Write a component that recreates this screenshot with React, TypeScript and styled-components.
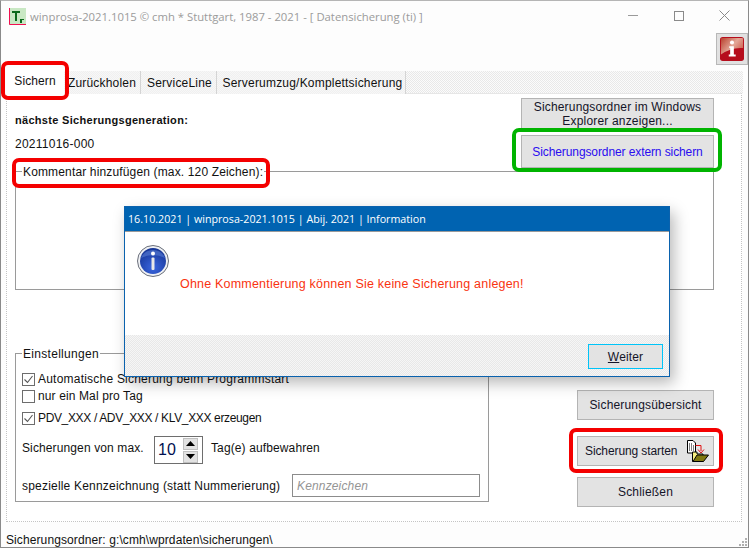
import React from "react";
import styled, { createGlobalStyle, css } from "styled-components";

const Global = createGlobalStyle`
  html, body { margin: 0; padding: 0; background: #fff; }
  body { font-family: "Liberation Sans", Arial, sans-serif; font-size: 12px; color: #111; }
`;

const dither = (a: string, b: string) => css`
  background: repeating-conic-gradient(${a} 0 25%, ${b} 0 50%) 0 0 / 2px 2px;
`;

const Window = styled.div`
  position: relative;
  box-sizing: border-box;
  width: 749px;
  height: 548px;
  background: #fdfdfd;
  border: 1px solid #8a8a8a;
  border-top-color: #b5b5b5;
  display: flex;
  flex-direction: column;
  overflow: hidden;
`;

const TitleBar = styled.header`
  box-sizing: border-box;
  height: 31px;
  flex: none;
  display: flex;
  align-items: center;
  padding: 0 0 1px 8px;
  gap: 4px;
`;

const TitleText = styled.span`
  font-family: "Open Sans", sans-serif;
  font-size: 11.3px;
  color: #9b9b9b;
  white-space: nowrap;
  flex: 1;
`;

const WinControls = styled.div`
  display: flex;
  align-items: center;
  height: 30px;
  padding-right: 18px;
  padding-bottom: 1px;
  box-sizing: border-box;
  gap: 35px;
`;

const ToolRow = styled.div`
  height: 39px;
  flex: none;
  display: flex;
  justify-content: flex-end;
  align-items: flex-start;
  padding-top: 1px;
  box-sizing: border-box;
`;

const InfoButton = styled.div`
  box-sizing: border-box;
  width: 32px;
  height: 32px;
  background: #e1e1e1;
  border: 1px solid #b8b8b8;
  display: flex;
  align-items: center;
  justify-content: center;
`;

const TabStrip = styled.nav`
  flex: none;
  height: 23px;
  margin-left: 5px;
  margin-right: 5px;
  display: flex;
  align-items: flex-end;
  ${dither("#e8e8e8", "#fbfbfb")}
`;

const Tab = styled.div<{ $active?: boolean; $w: number; $pl?: number }>`
  position: relative;
  box-sizing: border-box;
  width: ${(p) => p.$w}px;
  height: ${(p) => (p.$active ? "26px" : "23px")};
  flex: none;
  display: flex;
  align-items: center;
  justify-content: center;
  border-right: 1px solid #d4d4d4;
  padding-left: ${(p) => p.$pl ?? 0}px;
  letter-spacing: 0.2px;
  white-space: nowrap;
  ${(p) => (p.$active ? "background: #fff; border: 0; z-index: 1; letter-spacing: 0.1px;" : dither("#f0f0f0", "#f7f7f7"))}
`;

const Ring = styled.span<{ $color: string; $l: number; $r: number; $t: number; $b: number }>`
  position: absolute;
  left: ${(p) => p.$l}px;
  right: ${(p) => p.$r}px;
  top: ${(p) => p.$t}px;
  bottom: ${(p) => p.$b}px;
  border: 4px solid ${(p) => p.$color};
  border-radius: 7px;
  pointer-events: none;
  z-index: 2;
`;

const Panel = styled.main`
  box-sizing: border-box;
  height: 429px;
  flex: none;
  margin-left: 5px;
  width: 736px;
  margin-top: -1px;
  background: #fff;
  border: 1px dotted #c4c4c4;
  border-top: 1px solid #e6e6e6;
  padding-left: 8px;
  padding-right: 27px;
`;

const TopRow = styled.section`
  height: 77px;
  display: flex;
  justify-content: space-between;
`;

const GenInfo = styled.div`
  padding-top: 20px;
`;

const GenLabel = styled.div`
  font-size: 11px;
  font-weight: 700;
  line-height: 13px;
  letter-spacing: 0.3px;
`;

const GenValue = styled.div`
  margin-top: 10px;
  line-height: 14px;
  letter-spacing: 0.25px;
`;

const TopButtons = styled.div`
  width: 193px;
  padding-top: 4px;
  display: flex;
  flex-direction: column;
  gap: 5px;
`;

const Button = styled.div<{ $h: number; $blue?: boolean; $spread?: boolean }>`
  position: relative;
  box-sizing: border-box;
  height: ${(p) => p.$h}px;
  background: #e3e3e3;
  border: 1px solid #b4b4b4;
  display: flex;
  align-items: center;
  justify-content: ${(p) => (p.$spread ? "space-between" : "center")};
  text-align: center;
  line-height: 14px;
  letter-spacing: ${(p) => (p.$blue || p.$spread ? "-0.1px" : "0.18px")};
  color: ${(p) => (p.$blue ? "#2a0cf0" : "#141428")};
  ${(p) => p.$spread && "padding: 0 4px 0 7px;"}
`;

const GroupBox = styled.section<{ $h: number; $w?: number }>`
  position: relative;
  box-sizing: border-box;
  height: ${(p) => p.$h}px;
  width: ${(p) => (p.$w ? `${p.$w}px` : "auto")};
  flex: none;
  border: 1px solid #9a9a9a;
`;

const Legend = styled.span<{ $ls?: number }>`
  position: absolute;
  left: 6px;
  top: -7px;
  padding: 0 1px;
  background: #fff;
  line-height: 14px;
  letter-spacing: ${(p) => p.$ls ?? 0.15}px;
  white-space: nowrap;
`;

const LowerRow = styled.section`
  margin-top: 63px;
  display: flex;
  align-items: flex-start;
`;

const Settings = styled.div`
  padding: 18px 0 0 6px;
  display: flex;
  flex-direction: column;
`;

const CheckRow = styled.label<{ $mt: number; $ls: number }>`
  margin-top: ${(p) => p.$mt}px;
  height: 14px;
  display: flex;
  align-items: center;
  gap: 3px;
  white-space: nowrap;
  letter-spacing: ${(p) => p.$ls}px;
`;

const CheckBox = styled.span`
  box-sizing: border-box;
  width: 13px;
  height: 13px;
  background: #fff;
  border: 1px solid #6d6d6d;
  display: flex;
`;

const SpinRow = styled.div`
  margin-top: 11px;
  display: flex;
  align-items: center;
  height: 28px;
  white-space: nowrap;
  letter-spacing: 0.12px;
`;

const SpinLabel = styled.span<{ $w?: number }>`
  width: ${(p) => (p.$w ? `${p.$w}px` : "auto")};
  margin-bottom: 4px;
`;

const Spinner = styled.div`
  box-sizing: border-box;
  width: 49px;
  height: 28px;
  margin-right: 8px;
  border: 1px solid #6e6e6e;
  display: flex;
  align-items: center;
  padding-left: 3px;
  justify-content: space-between;
  padding-right: 4px;
`;

const SpinValue = styled.span`
  font-size: 16px;
  color: #001050;
`;

const SpinButtons = styled.div`
  width: 15px;
  display: flex;
  flex-direction: column;
  gap: 1px;
`;

const SpinBtn = styled.div`
  height: 12px;
  background: #e2e2e2;
  border: 1px solid #c0c0c0;
  box-sizing: border-box;
  display: flex;
  align-items: center;
  justify-content: center;
`;

const MarkRow = styled.div`
  margin-top: 10px;
  display: flex;
  align-items: center;
  height: 23px;
  white-space: nowrap;
  letter-spacing: 0.2px;
`;

const MarkLabel = styled.span`
  width: 270px;
`;

const MarkInput = styled.div`
  box-sizing: border-box;
  width: 188px;
  height: 23px;
  border: 1px solid #8c8c8c;
  padding-left: 4px;
  display: flex;
  align-items: center;
  font-style: italic;
  letter-spacing: 0.15px;
  color: #959595;
`;

const SideButtons = styled.div`
  margin-left: 88px;
  margin-top: 37px;
  width: 137px;
  flex: none;
  display: flex;
  flex-direction: column;
`;

const Gap = styled.div<{ $h: number }>`
  height: ${(p) => p.$h}px;
`;

const StatusBar = styled.footer`
  flex: 1;
  display: flex;
  align-items: center;
  padding-left: 5px;
  padding-top: 10px;
  letter-spacing: 0.1px;
  white-space: nowrap;
`;

const Grip = styled.svg`
  position: absolute;
  right: 0;
  bottom: 0;
`;

const Dialog = styled.div`
  position: absolute;
  left: 123px;
  top: 205px;
  box-sizing: border-box;
  width: 546px;
  height: 171px;
  background: #fff;
  border: 1px solid #0a62ae;
  box-shadow: 4px 6px 14px rgba(0, 0, 0, 0.28);
  display: flex;
  flex-direction: column;
  z-index: 1;
`;

const DialogTitle = styled.div`
  flex: none;
  box-sizing: border-box;
  height: 25px;
  background: #0063b1;
  border-bottom: 1px solid #9a9a9a;
  color: #fff;
  font-family: "Open Sans", sans-serif;
  font-size: 10.7px;
  display: flex;
  align-items: center;
  padding-left: 3px;
  white-space: nowrap;
`;

const DialogBody = styled.div`
  box-sizing: border-box;
  height: 103px;
  flex: none;
  padding: 13px 0 0 12px;
  display: flex;
  align-items: flex-start;
  gap: 11px;
`;

const DialogMessage = styled.p`
  margin: 32px 0 0;
  font-size: 12.5px;
  color: #f93310;
  letter-spacing: 0.2px;
  line-height: 14px;
`;

const DialogFooter = styled.div`
  flex: 1;
  display: flex;
  justify-content: flex-end;
  align-items: flex-start;
  padding: 9px 6px 0 0;
  ${dither("#e8e8e8", "#f6f6f6")}
`;

const DialogButton = styled.div`
  box-sizing: border-box;
  width: 75px;
  height: 25px;
  background: #e3e3e3;
  outline: 1px solid #00c4f8;
  outline-offset: -1px;
  display: flex;
  align-items: center;
  justify-content: center;
  letter-spacing: 0.1px;
  color: #141428;
`;

const AppIcon = () => (
  <svg width="17" height="17" viewBox="0 0 17 17">
    <rect width="17" height="17" fill="#c9e8c4" />
    <path d="M0.5 0V16.5H17" fill="none" stroke="#f01050" strokeWidth="1" />
    <path d="M3 3H11V5H8V13H6V5H3ZM11 11H15V12H13V15H11Z" fill="#0c6a1c" />
  </svg>
);

const RedInfoIcon = () => (
  <svg width="24" height="24" viewBox="0 0 26 26">
    <defs>
      <linearGradient id="redTop" x1="0" y1="0" x2="1" y2="0.6">
        <stop offset="0" stopColor="#b8402c" />
        <stop offset="0.6" stopColor="#e4a898" />
        <stop offset="1" stopColor="#d06858" />
      </linearGradient>
    </defs>
    <rect x="0" y="0" width="26" height="26" rx="3" fill="#b60d1c" />
    <path d="M1 2Q1 1 2 1H24Q25 1 25 2V12Q12 11 1 19Z" fill="url(#redTop)" />
    <circle cx="13" cy="6" r="2.2" fill="#fff" />
    <path d="M10 10H15V19H17V21H9.5V19H11V12H10Z" fill="#fff" />
  </svg>
);

const BlueInfoIcon = () => (
  <svg width="32" height="32" viewBox="0 0 32 32" style={{ flex: "none" }}>
    <defs>
      <radialGradient id="blueBall" cx="0.5" cy="0.75" r="0.8">
        <stop offset="0" stopColor="#3a66e0" />
        <stop offset="1" stopColor="#12308e" />
      </radialGradient>
    </defs>
    <circle cx="16" cy="16" r="15.5" fill="#eef0f4" stroke="#6a6f7a" strokeWidth="1" />
    <circle cx="16" cy="16" r="13" fill="url(#blueBall)" />
    <path d="M4 13A13 13 0 0 1 28 13Q16 7 4 13Z" fill="#5f84d8" opacity="0.55" />
    <circle cx="16" cy="8.5" r="2" fill="#fff" />
    <rect x="14.5" y="12.5" width="3" height="12.5" rx="1" fill="#e8e8e8" />
  </svg>
);

const BackupIcon = () => (
  <svg width="22" height="22" viewBox="0 0 22 22">
    <path d="M.5 .5H6L8.5 3V13H.5Z" fill="#fff" stroke="#000" />
    <path d="M2 4H5M2 6H7M2 8H7M2 10H7" stroke="#000" strokeDasharray="1 1" />
    <path d="M8.5 5.5H14V11" fill="none" stroke="#e01010" strokeWidth="1" />
    <path d="M11 9.5L14 13L17 9.5" fill="none" stroke="#e01010" strokeWidth="1" />
    <path d="M5.5 12H10V14H16V21.5H5.5Z" fill="#f6ee80" stroke="#000" />
    <path d="M6 21.5L10 15H21.5L16.5 21.5Z" fill="#807810" stroke="#000" />
  </svg>
);

const CheckMark = () => (
  <svg width="11" height="11" viewBox="0 0 11 11">
    <path d="M1.5 5.5L4.5 8.5L9.5 2" fill="none" stroke="#555" strokeWidth="1.1" />
  </svg>
);

const Arrow = ({ up }: { up?: boolean }) => (
  <svg width="9" height="5" viewBox="0 0 9 5">
    <path d={up ? "M0 5L4.5 0L9 5Z" : "M0 0L9 0L4.5 5Z"} fill="#000" />
  </svg>
);

export default function App() {
  return (
    <>
      <Global />
      <Window>
        <TitleBar>
          <AppIcon />
          <TitleText>winprosa-2021.1015 © cmh * Stuttgart, 1987 - 2021 - [ Datensicherung (ti) ]</TitleText>
          <WinControls>
            <svg width="11" height="11" viewBox="0 0 11 11">
              <path d="M0 5.5H10" stroke="#9a9a9a" />
            </svg>
            <svg width="10" height="10" viewBox="0 0 10 10">
              <rect x="0.5" y="0.5" width="9" height="9" fill="none" stroke="#8a8a8a" />
            </svg>
            <svg width="11" height="11" viewBox="0 0 11 11">
              <path d="M0.5 0.5L10.5 10.5M10.5 0.5L0.5 10.5" stroke="#8a8a8a" />
            </svg>
          </WinControls>
        </TitleBar>
        <ToolRow>
          <InfoButton>
            <RedInfoIcon />
          </InfoButton>
        </ToolRow>
        <TabStrip>
          <Tab $active $w={58}>
            Sichern
            <Ring $color="#f40000" $l={-5} $r={-5} $t={-7} $b={-6} />
          </Tab>
          <Tab $w={77}>Zurückholen</Tab>
          <Tab $w={76} $pl={2}>ServiceLine</Tab>
          <Tab $w={189} $pl={3}>Serverumzug/Komplettsicherung</Tab>
        </TabStrip>
        <Panel>
          <TopRow>
            <GenInfo>
              <GenLabel>nächste Sicherungsgeneration:</GenLabel>
              <GenValue>20211016-000</GenValue>
            </GenInfo>
            <TopButtons>
              <Button $h={32}>
                Sicherungsordner im Windows
                <br />
                Explorer anzeigen...
              </Button>
              <Button $h={33} $blue>
                Sicherungsordner extern sichern
                <Ring $color="#00b400" $l={-10} $r={-9} $t={-8} $b={-5} />
              </Button>
            </TopButtons>
          </TopRow>
          <GroupBox $h={119}>
            <Legend>
              Kommentar hinzufügen (max. 120 Zeichen):
              <Ring $color="#f40000" $l={-10} $r={-6} $t={-7} $b={-9} />
            </Legend>
          </GroupBox>
          <LowerRow>
            <GroupBox $h={149} $w={474}>
              <Legend $ls={0.3}>Einstellungen</Legend>
              <Settings>
                <CheckRow $mt={0} $ls={0.22}>
                  <CheckBox>
                    <CheckMark />
                  </CheckBox>
                  Automatische Sicherung beim Programmstart
                </CheckRow>
                <CheckRow $mt={3} $ls={0.12}>
                  <CheckBox />
                  nur ein Mal pro Tag
                </CheckRow>
                <CheckRow $mt={8} $ls={-0.35}>
                  <CheckBox>
                    <CheckMark />
                  </CheckBox>
                  PDV_XXX / ADV_XXX / KLV_XXX erzeugen
                </CheckRow>
                <SpinRow>
                  <SpinLabel $w={132}>Sicherungen von max.</SpinLabel>
                  <Spinner>
                    <SpinValue>10</SpinValue>
                    <SpinButtons>
                      <SpinBtn>
                        <Arrow up />
                      </SpinBtn>
                      <SpinBtn>
                        <Arrow />
                      </SpinBtn>
                    </SpinButtons>
                  </Spinner>
                  <SpinLabel>Tag(e) aufbewahren</SpinLabel>
                </SpinRow>
                <MarkRow>
                  <MarkLabel>spezielle Kennzeichnung (statt Nummerierung)</MarkLabel>
                  <MarkInput>Kennzeichen</MarkInput>
                </MarkRow>
              </Settings>
            </GroupBox>
            <SideButtons>
              <Button $h={30}>Sicherungsübersicht</Button>
              <Gap $h={16} />
              <Button $h={30} $spread>
                Sicherung starten
                <BackupIcon />
                <Ring $color="#f40000" $l={-9} $r={-10} $t={-9} $b={-8} />
              </Button>
              <Gap $h={11} />
              <Button $h={30}>Schließen</Button>
            </SideButtons>
          </LowerRow>
        </Panel>
        <StatusBar>Sicherungsordner: g:\cmh\wprdaten\sicherungen\</StatusBar>
        <Grip width="9" height="9" viewBox="0 0 9 9">
          <path d="M6 0h2v2H6zM3 3h2v2H3zM6 3h2v2H6zM0 6h2v2H0zM3 6h2v2H3zM6 6h2v2H6z" fill="#b0b0b0" />
        </Grip>
        <Dialog>
          <DialogTitle>16.10.2021 | winprosa-2021.1015 | Abij. 2021 | Information</DialogTitle>
          <DialogBody>
            <BlueInfoIcon />
            <DialogMessage>Ohne Kommentierung können Sie keine Sicherung anlegen!</DialogMessage>
          </DialogBody>
          <DialogFooter>
            <DialogButton>
              <u>W</u>eiter
            </DialogButton>
          </DialogFooter>
        </Dialog>
      </Window>
    </>
  );
}
